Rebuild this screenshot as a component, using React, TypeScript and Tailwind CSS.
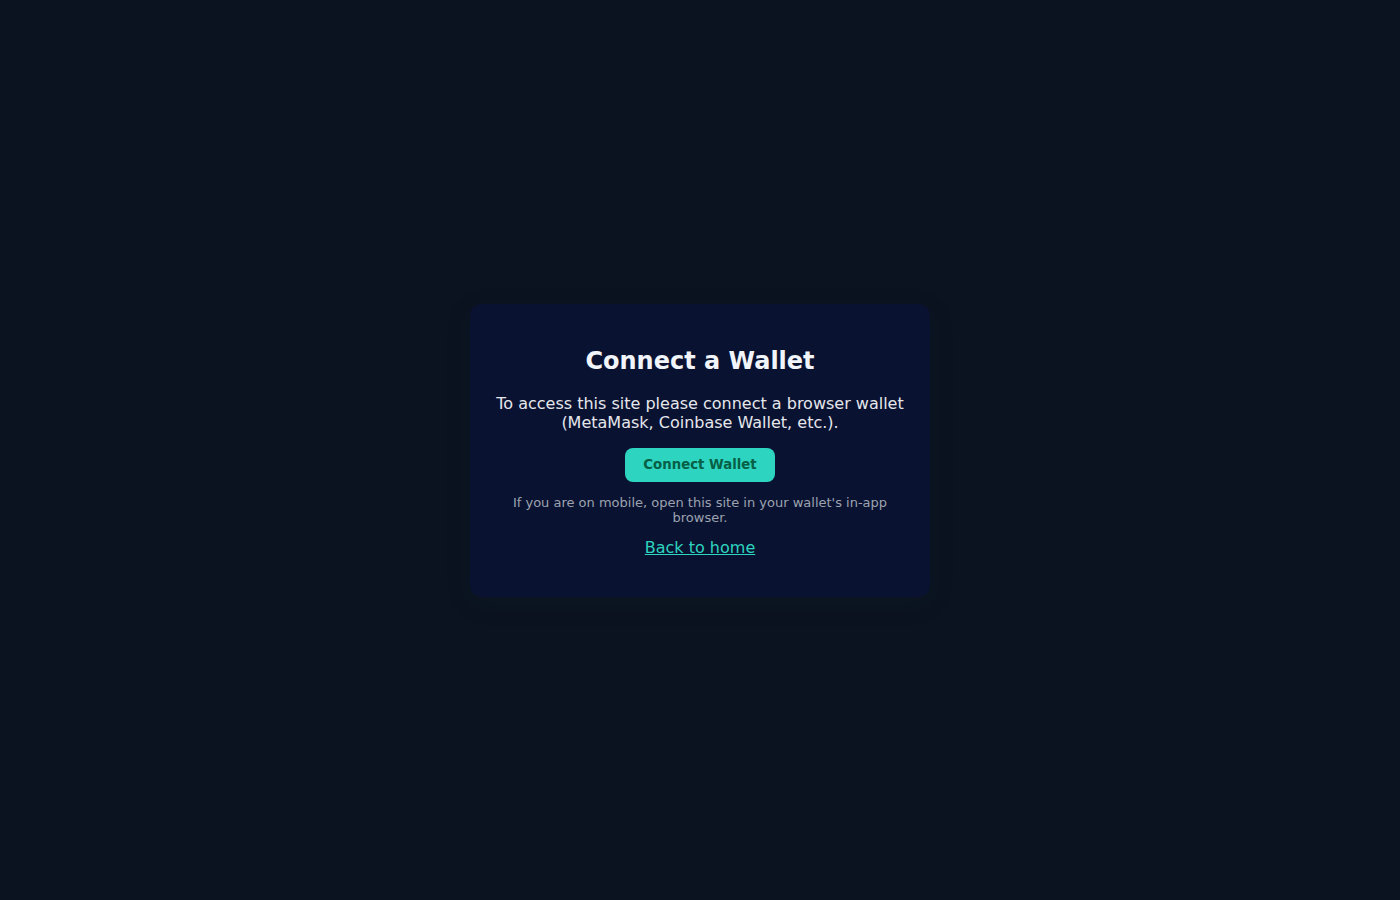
import React from 'react';

export default function App() {
  return (
    <div
      className="min-h-screen bg-[#0b1220] flex items-center justify-center"
      style={{ fontFamily: '"DejaVu Sans", sans-serif' }}
    >
      <div className="w-[460px] rounded-xl bg-[#0a1232] px-6 pt-[41px] pb-[37px] text-center shadow-[0_6px_24px_rgba(16,60,50,0.15)]">
        <h1 className="text-2xl leading-8 font-bold text-[#f1f5f9]">Connect a Wallet</h1>
        <p className="mt-[17px] text-base leading-[19px] text-[#e5e7eb]">
          To access this site please connect a browser wallet (MetaMask, Coinbase Wallet, etc.).
        </p>
        <button className="mt-4 rounded-lg bg-[#2dd4bf] px-[18px] py-[7px] text-[13.3px] leading-5 font-bold text-[#065f46]">
          Connect Wallet
        </button>
        <p className="mt-[13px] text-[13px] leading-[15px] text-[#9ca3af]">
          If you are on mobile, open this site in your wallet's in-app browser.
        </p>
        <a href="#" className="mt-[13px] inline-block text-base leading-5 text-[#2dd4bf] underline">
          Back to home
        </a>
      </div>
    </div>
  );
}
